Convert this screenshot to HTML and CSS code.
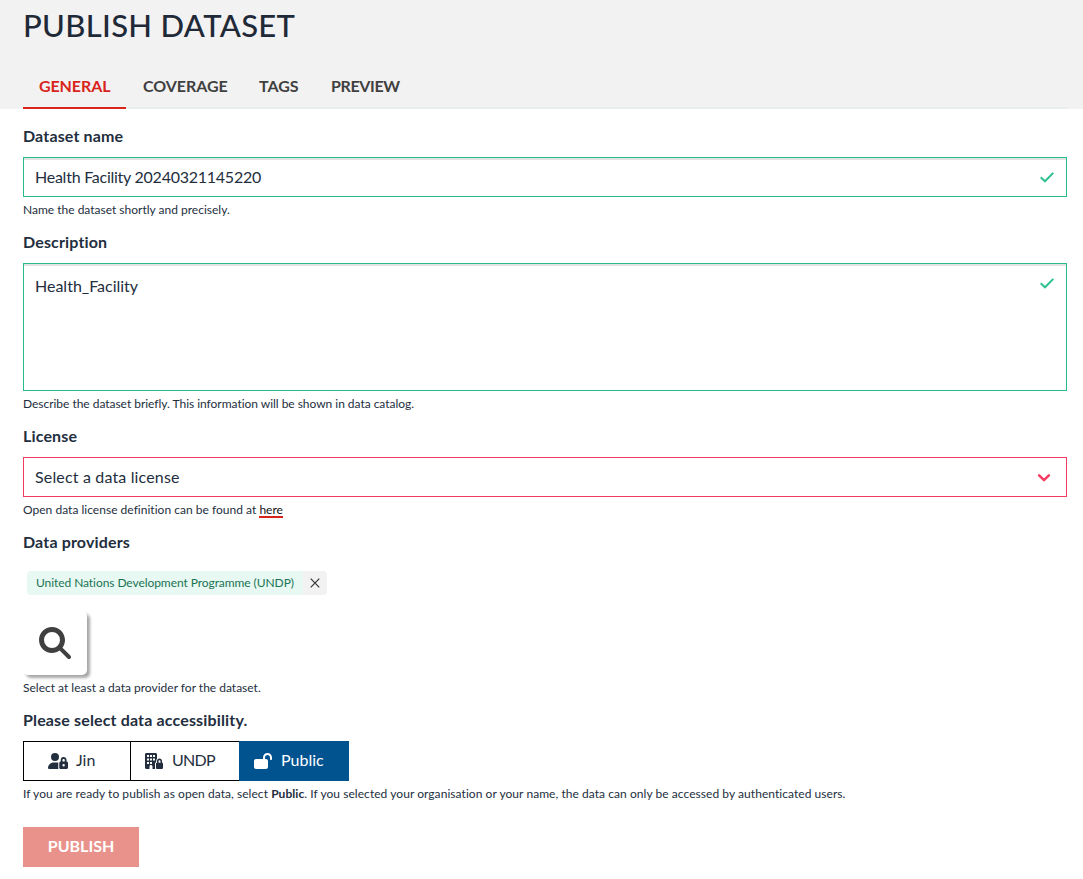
FILE: index.html
```html
<!DOCTYPE html>
<html lang="en">
<head>
<meta charset="utf-8">
<title>Publish dataset</title>
<link rel="stylesheet" href="styles.css">
</head>
<body>
<header class="page-header">
  <h1 class="title">PUBLISH DATASET</h1>
  <nav class="tabs">
    <a class="tab active">GENERAL</a>
    <a class="tab coverage">COVERAGE</a>
    <a class="tab tags">TAGS</a>
    <a class="tab preview">PREVIEW</a>
  </nav>
</header>
<main class="form">
  <section class="field">
    <h2 class="label">Dataset name</h2>
    <div class="control valid">
      <span class="value name">Health Facility 20240321145220</span>
      <svg class="check" viewBox="0 0 16 12"><path d="M1.7 6.2 6 10.3 14.3 1.9"/></svg>
    </div>
    <p class="help">Name the dataset shortly and precisely.</p>
  </section>
  <section class="field">
    <h2 class="label">Description</h2>
    <div class="control valid textarea">
      <span class="value">Health_Facility</span>
      <svg class="check" viewBox="0 0 16 12"><path d="M1.7 6.2 6 10.3 14.3 1.9"/></svg>
    </div>
    <p class="help snug">Describe the dataset briefly. This information will be shown in data catalog.</p>
  </section>
  <section class="field">
    <h2 class="label">License</h2>
    <div class="control invalid">
      <span class="value loose">Select a data license</span>
      <svg class="chevron" viewBox="0 0 14 10"><path d="M2.100 2.300 7 7.200 11.900 2.300"/></svg>
    </div>
    <p class="help license">Open data license definition can be found at <a class="link">here</a></p>
  </section>
  <section class="field">
    <h2 class="label">Data providers</h2>
    <div class="tag-row">
      <span class="tag">United Nations Development Programme (UNDP)</span>
      <span class="tag-delete"><svg viewBox="0 0 10 10"><path d="M.7.7 9.3 9.3M9.3.7.7 9.3"/></svg></span>
    </div>
    <button class="search"><svg viewBox="0 0 512 512"><path d="M416 208c0 45.900-14.900 88.300-40 122.700L502.600 457.400c12.500 12.500 12.500 32.800 0 45.300s-32.800 12.500-45.300 0L330.700 376c-34.400 25.200-76.800 40-122.700 40C93.100 416 0 322.900 0 208S93.100 0 208 0S416 93.100 416 208zM208 336a128 128 0 1 0 0-256 128 128 0 1 0 0 256z"/></svg></button>
    <p class="help">Select at least a data provider for the dataset.</p>
  </section>
  <section class="field">
    <h2 class="label">Please select data accessibility.</h2>
    <div class="segments">
      <button class="segment first"><svg class="i-user" viewBox="0 0 640 512"><path fill-rule="evenodd" d="M224 256A128 128 0 1 0 224 0a128 128 0 1 0 0 256zm-45.700 48C79.800 304 0 383.800 0 482.300C0 498.700 13.300 512 29.700 512H337c-6-9.400-9-20.300-9-32V332c0-6 1-12 3-17-17-7-35-11-53-11H178.300zM496 128c-53 0-88 40-88 88v56c-26 0-48 22-48 48V464c0 26.500 21.500 48 48 48H592c26.500 0 48-21.500 48-48V320c0-26-22-48-48-48v-56c0-48-43-88-96-88zm4 64c20 0 36 14 36 32v48h-72v-48c0-18 16-32 36-32zm0 160a38 38 0 1 1 0 76a38 38 0 1 1 0-76z"/></svg><span>Jin</span></button>
      <button class="segment second"><svg class="i-building" viewBox="0 0 576 512"><path fill-rule="evenodd" d="M48 0C21.500 0 0 21.500 0 48V464c0 26.500 21.500 48 48 48h96V432c0-26.500 21.500-48 48-48s48 21.500 48 48v80h91c-7-10-11-22-11-36V340c0-26 14-46 36-56V260c0-30 12-56 28-76V48c0-26.500-21.500-48-48-48zM64 64h64v64H64zM160 64h64v64h-64zM256 64h64v64h-64zM64 176h64v64H64zM160 176h64v64h-64zM256 176h64v64h-64zM64 288h64v64H64zM160 288h64v64h-64zM464 176c-48 0-80 36-80 80v56c-18 0-32 14-32 32V472c0 22 18 40 40 40H536c22 0 40-18 40-40V344c0-18-14-32-32-32v-56c0-44-32-80-80-80zm0 52c18 0 32 14 32 32v52h-64v-52c0-18 14-32 32-32z"/></svg><span class="undp">UNDP</span></button>
      <button class="segment third"><svg class="i-open" viewBox="0 0 576 512"><path d="M352 144c0-44.200 35.800-80 80-80s80 35.800 80 80v48c0 17.700 14.300 32 32 32s32-14.300 32-32V144C576 64.500 511.500 0 432 0S288 64.500 288 144v48H64c-35.300 0-64 28.700-64 64V448c0 35.300 28.700 64 64 64H384c35.300 0 64-28.700 64-64V256c0-35.300-28.700-64-64-64H352V144z"/></svg><span>Public</span></button>
    </div>
    <p class="help spaced">If you are ready to publish as open data, select <strong>Public</strong>. If you selected your organisation or your name, the data can only be accessed by authenticated users.</p>
  </section>
  <button class="publish">PUBLISH</button>
</main>
</body>
</html>
```

FILE: styles.css
```css
* { box-sizing: border-box; margin: 0; padding: 0; }
body { font: 16px/24px Lato, "Liberation Sans", sans-serif; color: #232e3e; background: #fff; }
button { font: inherit; color: inherit; border: 0; background: none; }
svg { display: block; flex: none; }

.page-header { height: 109px; background: #f2f2f2; padding: 0 16px 0 23px; display: flex; flex-direction: column; justify-content: space-between; }
.title { font-size: 31px; font-weight: 500; line-height: 36px; letter-spacing: .33px; padding-top: 7px; color: #1f2937; }
.tabs { display: flex; height: 44px; border-bottom: 2px solid #e9eeed; }
.tab { height: 44px; padding: 9px 16px; font-weight: 700; color: #404040; letter-spacing: -.05px; }
.tab.active { width: 103px; color: #d9241c; border-bottom: 2px solid #d9241c; letter-spacing: -.1px; }
.tab.coverage { width: 117px; padding-left: 17px; }
.tab.tags { width: 72px; }
.tab.preview { letter-spacing: -.35px; }

.form { padding: 16px 16px 0 23px; }
.field { margin-bottom: 12px; }
.label { font-size: 16px; font-weight: 700; line-height: 22px; letter-spacing: .15px; padding-bottom: 10px; }
.control { display: flex; align-items: center; justify-content: space-between; height: 40px; padding: 0 11px; border: 1px solid #27bb8a; }
.control.valid { box-shadow: inset 0 2px #e2e3e2; }
.control.textarea { height: 128px; align-items: flex-start; padding-top: 10px; }
.control.textarea .check { margin-top: 3px; }
.control.invalid { border-color: #f23b61; padding: 0 15px 1px 11px; }
.value.name { letter-spacing: -.25px; }
.value.loose { letter-spacing: .16px; }
.check { width: 16px; height: 12px; fill: none; stroke: #2dc28f; stroke-width: 2; }
.chevron { width: 14px; height: 10px; margin-top: 2px; fill: none; stroke: #f73c64; stroke-width: 2.5; stroke-linecap: round; stroke-linejoin: round; }
.help { font-size: 12px; line-height: 18px; margin-top: 4px; }
.help.snug { letter-spacing: -.03px; }
.help.spaced { letter-spacing: .055px; }
.help.license { letter-spacing: .02px; }
.link { display: inline-block; height: 17px; line-height: 18px; color: #111; border-bottom: 2px solid #d9241c; vertical-align: top; }

.tag-row { display: flex; padding: 8px 4px 16px; }
.tag, .tag-delete { height: 24px; line-height: 24px; font-size: 12px; }
.tag { width: 276px; padding-left: 9px; background: #e8f8f2; color: #1a7455; border-radius: 4px 0 0 4px; letter-spacing: -.07px; white-space: nowrap; }
.tag-delete { width: 24px; display: grid; place-items: center; background: #f2f2f2; border-radius: 0 4px 4px 0; }
.tag-delete svg { width: 10px; height: 10px; stroke: #333; stroke-width: 1.2; }
.search { display: grid; place-items: center; width: 64px; height: 64px; border-radius: 5px; box-shadow: 3px 3px 3px rgba(0, 0, 0, .35); background: #fff; }
.search svg { width: 32px; height: 32px; fill: #404040; }

.segments { display: flex; }
.segment { display: flex; align-items: center; height: 40px; border: 1px solid #000; }
.segment svg { fill: currentColor; }
.segment span { padding-bottom: 2px; }
.first { width: 108px; padding-left: 24px; gap: 8px; }
.second { width: 108px; padding-left: 14px; gap: 9px; border-left: 0; border-right: 0; }
.third { width: 110px; padding-left: 14px; gap: 9px; background: #00538f; border-color: #00538f; color: #fff; }
.i-user { width: 20px; height: 16px; }
.i-building, .i-open { width: 18px; height: 16px; }
.undp { letter-spacing: -.75px; }

.publish { display: block; width: 116px; height: 40px; margin-top: 24px; padding-bottom: 2px; background: #e9928b; color: #fff; font-weight: 700; }
```
